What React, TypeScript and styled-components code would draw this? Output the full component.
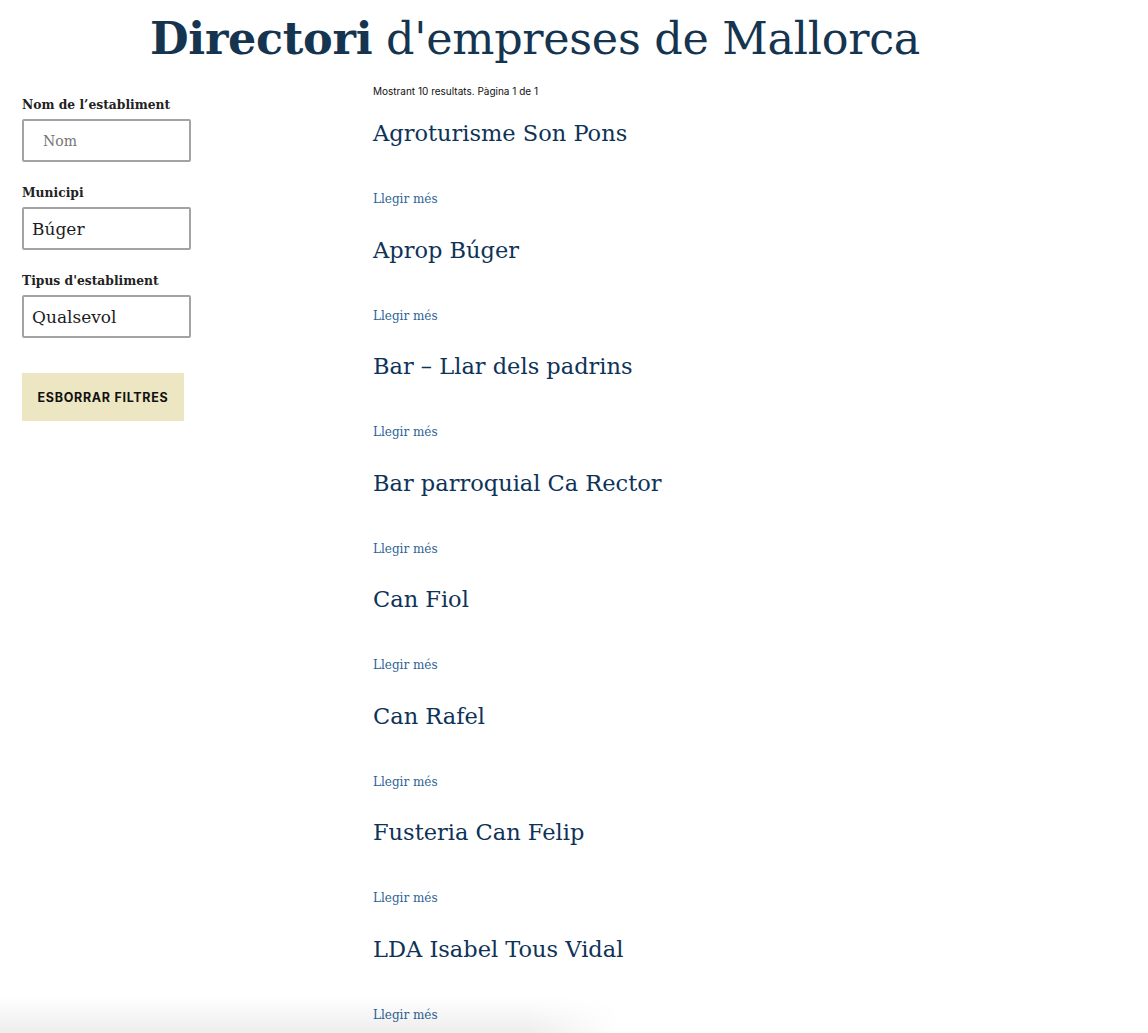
import React from "react";
import styled, { createGlobalStyle } from "styled-components";

const Global = createGlobalStyle`
  html, body { margin: 0; padding: 0; background: #fff; }
  body { font-family: "DejaVu Serif", "Liberation Serif", serif; }
`;

const Page = styled.div`
  width: 1148px;
  height: 1033px;
  position: relative;
  overflow: hidden;
`;

const Title = styled.h1`
  margin: 0;
  padding: 10px 0 0 150px;
  height: 70px;
  box-sizing: border-box;
  font-family: "DejaVu Serif", serif;
  font-size: 44.5px;
  line-height: 56px;
  font-weight: 300;
  color: #15344f;
  white-space: nowrap;
  letter-spacing: -0.3px;
  b { font-weight: 700; }
`;

const Layout = styled.div`
  display: grid;
  grid-template-columns: 351px 1fr;
`;

const Sidebar = styled.aside`
  padding: 26px 0 0 22px;
  display: flex;
  flex-direction: column;
`;

const Field = styled.div`
  display: flex;
  flex-direction: column;
  margin-bottom: 22px;
`;

const Label = styled.label`
  font-family: "DejaVu Serif", serif;
  font-size: 12.3px;
  font-weight: 700;
  color: #222;
  line-height: 17px;
  margin-bottom: 6px;
`;

const Input = styled.div<{ $placeholder?: boolean }>`
  width: 169px;
  height: 43px;
  box-sizing: border-box;
  border: 2px solid #a3a3a3;
  border-radius: 2px;
  display: flex;
  align-items: center;
  padding-left: ${(p) => (p.$placeholder ? "19px" : "8px")};
  font-family: "DejaVu Serif", serif;
  font-size: ${(p) => (p.$placeholder ? "14px" : "17px")};
  color: ${(p) => (p.$placeholder ? "#757575" : "#1d1d1d")};
`;

const Button = styled.button`
  margin-top: 13px;
  width: 162px;
  height: 48px;
  border: 0;
  border-radius: 0;
  background: #ede6c3;
  font-family: Inter, "Liberation Sans", sans-serif;
  font-weight: 700;
  font-size: 12.5px;
  letter-spacing: 0.7px;
  color: #111;
  text-transform: uppercase;
  padding: 0;
`;

const Main = styled.main`
  padding-top: 15px;
  padding-left: 22px;
`;

const Count = styled.div`
  font-family: Inter, "Liberation Sans", sans-serif;
  font-size: 10px;
  color: #111;
  line-height: 12px;
  margin-bottom: 21px;
`;

const Item = styled.article`
  height: 116.5px;
  display: flex;
  flex-direction: column;
`;

const ItemTitle = styled.h2`
  margin: 0;
  font-family: "DejaVu Serif", serif;
  font-weight: 400;
  font-size: 22.5px;
  line-height: 30px;
  color: #0e3358;
  letter-spacing: 0;
`;

const More = styled.a`
  margin-top: 43px;
  font-family: "DejaVu Serif", serif;
  font-size: 12px;
  line-height: 16px;
  color: #2c6396;
  text-decoration: none;
`;

const BottomShade = styled.div`
  position: fixed;
  left: 0;
  bottom: 0;
  width: 620px;
  height: 36px;
  pointer-events: none;
  background: linear-gradient(to bottom, rgba(0,0,0,0), rgba(0,0,0,0.07));
  -webkit-mask-image: linear-gradient(to right, #000 85%, transparent);
  mask-image: linear-gradient(to right, #000 85%, transparent);
`;

const items = [
  "Agroturisme Son Pons",
  "Aprop Búger",
  "Bar – Llar dels padrins",
  "Bar parroquial Ca Rector",
  "Can Fiol",
  "Can Rafel",
  "Fusteria Can Felip",
  "LDA Isabel Tous Vidal",
];

export default function App() {
  return (
    <Page>
      <Global />
      <Title>
        <b>Directori</b> d'empreses de Mallorca
      </Title>
      <Layout>
        <Sidebar>
          <Field>
            <Label>Nom de l’establiment</Label>
            <Input $placeholder>Nom</Input>
          </Field>
          <Field>
            <Label>Municipi</Label>
            <Input>Búger</Input>
          </Field>
          <Field>
            <Label>Tipus d'establiment</Label>
            <Input>Qualsevol</Input>
          </Field>
          <Button>Esborrar filtres</Button>
        </Sidebar>
        <Main>
          <Count>Mostrant 10 resultats. Pàgina 1 de 1</Count>
          {items.map((t) => (
            <Item key={t}>
              <ItemTitle>{t}</ItemTitle>
              <More href="#">Llegir més</More>
            </Item>
          ))}
        </Main>
      </Layout>
      <BottomShade />
    </Page>
  );
}
